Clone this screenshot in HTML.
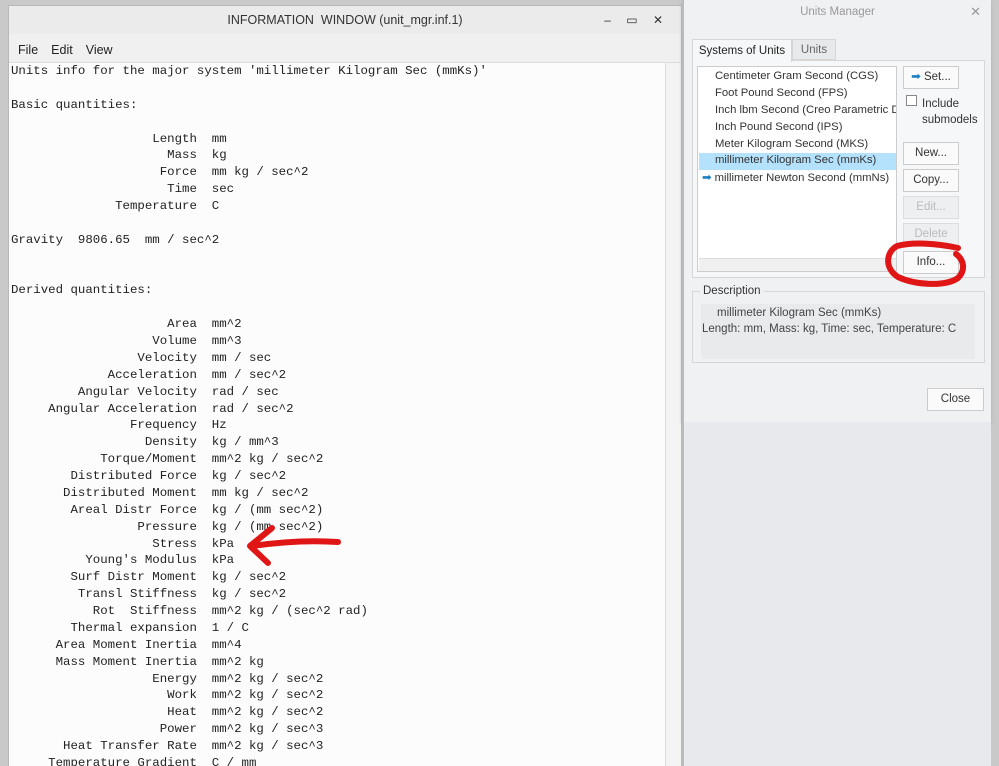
<!DOCTYPE html>
<html><head><meta charset="utf-8"><style>
*{margin:0;padding:0;box-sizing:border-box}
body{width:999px;height:766px;overflow:hidden;background:#c9c9c9;position:relative;font-family:"Liberation Sans",sans-serif}
.abs{position:absolute}
#iw{left:8px;top:5px;width:674px;height:761px;background:#fcfcfc;border:1px solid #b8b8b8;border-bottom:none;overflow:hidden}
#tb{left:0;top:0;width:672px;height:28px;background:#ebebeb;font-size:12.5px;color:#333;text-align:center;line-height:28px}
#menu{left:0;top:28px;width:672px;height:29px;background:#f0f0f0;border-bottom:1px solid #ddd;font-size:12.5px;color:#222;line-height:32px}
#menu span{margin-left:9px;margin-right:4px}
pre{position:absolute;left:2px;top:57px;font-family:"Liberation Mono",monospace;font-size:12.4px;line-height:16.88px;color:#222}
#sb{left:656px;top:57px;width:16px;height:720px;background:#f4f4f4;border-left:1px solid #ddd}
#um{left:682px;top:0;width:309px;height:422px;background:#f0f1f3;border-left:2px solid #bbb;box-shadow:0 2px 3px #aaa}
#below{left:682px;top:422px;width:309px;height:344px;background:#e8e9ec;border-left:2px solid #bbb}
.s{font-size:11.5px;color:#444}
.btn{position:absolute;width:56px;height:23px;background:#fafafa;border:1px solid #ccc;font-size:11.5px;color:#333;text-align:center;line-height:21px}
.dis{background:#eeeff1;color:#bbb;border-color:#ddd}
.li{position:absolute;left:17px;font-size:11.3px;color:#333;white-space:nowrap}
</style></head><body>
<div id="iw" class="abs">
 <div id="tb" class="abs">INFORMATION&nbsp; WINDOW (unit_mgr.inf.1)<span class="abs" style="right:12px;top:0;letter-spacing:6px;font-size:12px">‒ ▭ ✕</span></div>
 <div id="menu" class="abs"><span>File</span><span>Edit</span><span>View</span></div>
 <div id="sb" class="abs"></div>
<pre>Units info for the major system 'millimeter Kilogram Sec (mmKs)'

Basic quantities:

                   Length  mm
                     Mass  kg
                    Force  mm kg / sec^2
                     Time  sec
              Temperature  C

Gravity  9806.65  mm / sec^2


Derived quantities:

                     Area  mm^2
                   Volume  mm^3
                 Velocity  mm / sec
             Acceleration  mm / sec^2
         Angular Velocity  rad / sec
     Angular Acceleration  rad / sec^2
                Frequency  Hz
                  Density  kg / mm^3
            Torque/Moment  mm^2 kg / sec^2
        Distributed Force  kg / sec^2
       Distributed Moment  mm kg / sec^2
        Areal Distr Force  kg / (mm sec^2)
                 Pressure  kg / (mm sec^2)
                   Stress  kPa
          Young's Modulus  kPa
        Surf Distr Moment  kg / sec^2
         Transl Stiffness  kg / sec^2
           Rot  Stiffness  mm^2 kg / (sec^2 rad)
        Thermal expansion  1 / C
      Area Moment Inertia  mm^4
      Mass Moment Inertia  mm^2 kg
                   Energy  mm^2 kg / sec^2
                     Work  mm^2 kg / sec^2
                     Heat  mm^2 kg / sec^2
                    Power  mm^2 kg / sec^3
       Heat Transfer Rate  mm^2 kg / sec^3
     Temperature Gradient  C / mm</pre>
</div>
<div id="um" class="abs">
 <div class="abs" style="left:0;top:0;width:307px;height:24px;text-align:center;line-height:24px;font-size:11.5px;color:#999">Units Manager</div>
 <div class="abs" style="right:10px;top:4px;font-size:13px;color:#999">✕</div>
 <div class="abs" style="left:8px;top:60px;width:293px;height:218px;border:1px solid #d6d6d6;background:#f6f7f8"></div>
 <div class="abs s" style="left:8px;top:39px;width:100px;height:23px;background:#f6f7f8;border:1px solid #d6d6d6;border-bottom:none;line-height:22px;text-align:center;color:#222">Systems of Units</div>
 <div class="abs s" style="left:108px;top:39px;width:44px;height:21px;background:#e8e9eb;border:1px solid #d6d6d6;line-height:21px;text-align:center;color:#666">Units</div>
 <div class="abs" style="left:13px;top:66px;width:200px;height:206px;background:#fff;border:1px solid #ccc;overflow:hidden">
  <div class="li" style="top:3px">Centimeter Gram Second (CGS)</div>
  <div class="li" style="top:20px">Foot Pound Second (FPS)</div>
  <div class="li" style="top:37px">Inch lbm Second (Creo Parametric De</div>
  <div class="li" style="top:54px">Inch Pound Second (IPS)</div>
  <div class="li" style="top:71px">Meter Kilogram Second (MKS)</div>
  <div class="abs" style="left:1px;top:86px;width:198px;height:17px;background:#b4e1fb"></div>
  <div class="li" style="top:87px">millimeter Kilogram Sec (mmKs)</div>
  <div class="li" style="top:104px;left:4px"><span style="color:#1a7fc2">➡</span> millimeter Newton Second (mmNs)</div>
  <div class="abs" style="left:1px;top:191px;width:198px;height:13px;background:#f0f0f0;border-top:1px solid #ddd"></div>
 </div>
 <div class="btn" style="left:219px;top:66px"><span style="color:#1a7fc2">➡</span> Set...</div>
 <div class="abs" style="left:222px;top:95px;width:11px;height:11px;border:1px solid #888;background:#fff"></div>
 <div class="abs s" style="left:238px;top:96px;line-height:16px;color:#333">Include<br>submodels</div>
 <div class="btn" style="left:219px;top:142px">New...</div>
 <div class="btn" style="left:219px;top:169px">Copy...</div>
 <div class="btn dis" style="left:219px;top:196px">Edit...</div>
 <div class="btn dis" style="left:219px;top:223px">Delete</div>
 <div class="btn" style="left:219px;top:251px">Info...</div>
 <div class="abs" style="left:8px;top:291px;width:293px;height:72px;border:1px solid #d6d6d6"></div>
 <div class="abs s" style="left:16px;top:285px;background:#f0f1f3;padding:0 3px;color:#333">Description</div>
 <div class="abs" style="left:17px;top:304px;width:274px;height:55px;background:#e9eaec"></div>
 <div class="abs s" style="left:33px;top:307px">millimeter Kilogram Sec (mmKs)</div>
 <div class="abs s" style="left:18px;top:323px">Length: mm, Mass: kg, Time: sec, Temperature: C</div>
 <div class="btn" style="left:243px;top:388px;width:57px">Close</div>
</div>
<div id="below" class="abs"></div>
<svg class="abs" style="left:0;top:0" width="999" height="766">
 <g fill="none" stroke="#e01515" stroke-width="6" stroke-linecap="round" stroke-linejoin="round">
  <path d="M338 542 C310 540 280 542 252 546"/>
  <path d="M272 528 L250 546 L268 563"/>
  <path d="M958 248 C935 243 912 242 897 246 C886 252 884 268 898 277 C915 285 945 287 958 278 C966 270 964 260 956 254"/>
 </g>
</svg>
</body></html>
